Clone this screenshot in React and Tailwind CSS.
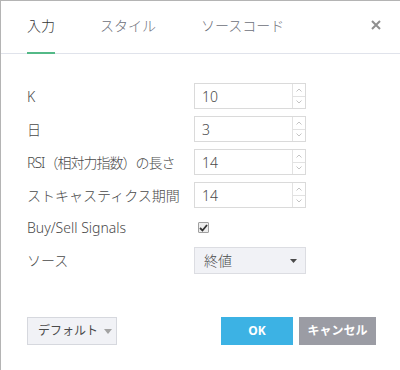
import React, { useState } from 'react';

const font = { fontFamily: '"Noto Sans", "Noto Sans CJK JP", sans-serif' };

function Spinner() {
  return (
    <div className="flex flex-col w-[13px] border-l border-[#e2e2e2]">
      <div className="flex-1 flex items-center justify-center border-b border-[#e2e2e2]">
        <svg width="6" height="4" viewBox="0 0 6 4">
          <path d="M0.5 3.5 L3 1 L5.5 3.5" fill="none" stroke="#c4c4c4" strokeWidth="1" />
        </svg>
      </div>
      <div className="flex-1 flex items-center justify-center">
        <svg width="6" height="4" viewBox="0 0 6 4">
          <path d="M0.5 0.5 L3 3 L5.5 0.5" fill="none" stroke="#c4c4c4" strokeWidth="1" />
        </svg>
      </div>
    </div>
  );
}

function NumberRow({ label, value, tight }) {
  return (
    <div className="flex items-center h-[26px]">
      <div className={"w-[167px] text-[14px] font-light text-[#4a4a4a] whitespace-nowrap " + (tight ? "tracking-[-1px]" : "")}>
        {label}
      </div>
      <div className="flex w-[112px] h-[26px] border border-[#dadada] bg-white">
        <div className="flex-1 flex items-center pl-[7px] text-[14px] font-light text-[#4a4a4a]">{value}</div>
        <Spinner />
      </div>
    </div>
  );
}

export default function App() {
  const [tab, setTab] = useState(0);
  const tabs = ["入力", "スタイル", "ソースコード"];

  return (
    <div style={font} className="w-[400px] h-[370px] bg-white border-t border-l border-[#b4b4b4] flex flex-col">
      {/* ヘッダー: タブと閉じるボタン */}
      <div className="relative h-[53px] border-b border-[#e0e3eb] flex items-stretch pl-[26px] pr-[19px]">
        <div className="flex gap-[45px]">
          {tabs.map((t, i) => (
            <div
              key={t}
              onClick={() => setTab(i)}
              className={
                "relative flex items-center text-[14px] font-light pb-[3px] cursor-pointer " +
                (tab === i ? "text-[#333333]" : "text-[#6d707a]")
              }
            >
              {t}
              {tab === i && <div className="absolute left-0 right-0 bottom-[-1px] h-[2px] bg-[#53b987]" />}
            </div>
          ))}
        </div>
        <div className="ml-auto flex items-center pb-[4px]">
          <svg width="10" height="10" viewBox="0 0 10 10">
            <path d="M1 1 L9 9 M9 1 L1 9" stroke="#8f8f8f" strokeWidth="2" />
          </svg>
        </div>
      </div>

      {/* 入力項目 */}
      <div className="flex flex-col gap-[7px] pl-[26px] pt-[29px]">
        <NumberRow label="K" value="10" />
        <NumberRow label="日" value="3" />
        <NumberRow label="RSI（相対力指数）の長さ" value="14" tight />
        <NumberRow label="ストキャスティクス期間" value="14" />
        <div className="flex items-center h-[25px]">
          <div className="w-[171px] text-[14px] font-light text-[#4a4a4a]">Buy/Sell Signals</div>
          <div className="w-[11px] h-[11px] border border-[#a0a0a0] rounded-[1px] bg-[#eeeeee] flex items-center justify-center">
            <svg width="9" height="8" viewBox="0 0 9 8">
              <path d="M1 4 L3.5 6.5 L8 1" fill="none" stroke="#333" strokeWidth="1.8" />
            </svg>
          </div>
        </div>
        <div className="flex items-center h-[27px]">
          <div className="w-[167px] text-[14px] font-light text-[#4a4a4a]">ソース</div>
          <div className="flex items-center justify-between w-[112px] h-[27px] border border-[#dcdde2] bg-[#f1f2f6] pl-[9px] pr-[8px]">
            <span className="text-[14px] font-light text-[#4a4a4a]">終値</span>
            <svg width="7" height="4" viewBox="0 0 7 4">
              <path d="M0 0 L7 0 L3.5 4 Z" fill="#4a4a4a" />
            </svg>
          </div>
        </div>
      </div>

      {/* フッター */}
      <div className="mt-auto mb-[25px] flex items-center pl-[26px] pr-[24px]">
        <button className="flex items-center gap-[6px] h-[28px] w-[90px] pl-[10px] border border-[#d6d8de] bg-[#f1f2f6] text-[12px] text-[#4a4a4a] whitespace-nowrap">
          デフォルト
          <svg width="8" height="5" viewBox="0 0 8 5">
            <path d="M0 0 L8 0 L4 5 Z" fill="#a3a3a3" />
          </svg>
        </button>
        <div className="ml-auto flex gap-[6px]">
          <button className="h-[28px] w-[72px] bg-[#3cb2e4] text-white text-[12px] font-bold">OK</button>
          <button className="h-[28px] w-[77px] bg-[#9b9ca4] text-white text-[12px] font-bold whitespace-nowrap">キャンセル</button>
        </div>
      </div>
    </div>
  );
}
